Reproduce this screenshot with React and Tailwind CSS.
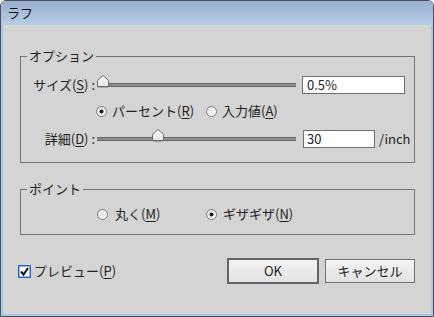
import React from "react";

const font = { fontFamily: '"Noto Sans CJK JP", "Noto Sans", sans-serif' };

function M({ c }) {
  return <span className="underline underline-offset-[2px]">{c}</span>;
}

function Radio({ checked }) {
  return (
    <svg width="11" height="11" viewBox="0 0 11 11" className="shrink-0">
      <defs>
        <linearGradient id="rg" x1="0" y1="0" x2="1" y2="1">
          <stop offset="0" stopColor="#e2e2e2" />
          <stop offset="1" stopColor="#ffffff" />
        </linearGradient>
      </defs>
      <circle cx="5.5" cy="5.5" r="5" fill="url(#rg)" stroke="#7d7d7d" strokeWidth="1" />
      {checked && <circle cx="5.5" cy="5.5" r="2" fill="#1a1a1a" />}
    </svg>
  );
}

function Thumb() {
  return (
    <svg width="12" height="13" viewBox="0 0 12 13">
      <defs>
        <linearGradient id="tg" x1="0" y1="0" x2="0" y2="1">
          <stop offset="0" stopColor="#ffffff" />
          <stop offset="1" stopColor="#e4e4e4" />
        </linearGradient>
      </defs>
      <path d="M0.5 5.5 L6 0.5 L11.5 5.5 L11.5 11.5 L0.5 11.5 Z" fill="url(#tg)" stroke="#6a6a6a" strokeWidth="1" />
      <line x1="1" y1="12.5" x2="11" y2="12.5" stroke="#a9a9a9" strokeWidth="1" />
    </svg>
  );
}

function Slider({ width, pos }) {
  return (
    <div className="relative h-[13px] flex items-center shrink-0" style={{ width }}>
      <div className="w-full h-[4px] bg-[#8c8c8c] border-y border-[#666666]" />
      <div className="absolute top-[-4px]" style={{ left: pos - 6 }}>
        <Thumb />
      </div>
    </div>
  );
}

export default function App() {
  return (
    <div
      className="w-[434px] h-[317px] flex flex-col border border-[#4a5260] rounded-t-[6px] overflow-hidden text-[13px] leading-[16px] text-[#222222]"
      style={font}
    >
      <div className="h-[24px] shrink-0 bg-gradient-to-b from-[#98b0cf] to-[#b9cee7] pl-[6px] flex items-center text-[13px] text-[#111]">
        ラフ
      </div>
      <div className="flex-1 bg-[#d4d4d4] border-x-2 border-b-2 border-[#a9c6e6] flex flex-col">
        <div className="pl-[17px] pr-[16px] pt-[23px] flex flex-col">
          <fieldset className="border border-[#767676] w-[395px] pb-[14px]">
            <legend className="ml-[6px] px-[2px] leading-[16px]">オプション</legend>
            <div className="flex items-center mt-[12px] h-[18px]">
              <div className="w-[76px] text-right pr-[2px]">
                サイズ(<M c="S" />) :
              </div>
              <Slider width={199} pos={6} />
              <div className="ml-[6px] w-[103px] h-[18px] bg-white border border-[#6e6e6e] pl-[4px] flex items-center">
                0.5%
              </div>
            </div>
            <div className="flex items-center mt-[9px] h-[16px] pl-[75px]">
              <div className="flex items-center gap-[5px] w-[110px]">
                <Radio checked />
                <span>
                  パーセント(<M c="R" />)
                </span>
              </div>
              <div className="flex items-center gap-[5px]">
                <Radio />
                <span>
                  入力値(<M c="A" />)
                </span>
              </div>
            </div>
            <div className="flex items-center mt-[11px] h-[18px]">
              <div className="w-[76px] text-right pr-[2px]">
                詳細(<M c="D" />) :
              </div>
              <Slider width={199} pos={61} />
              <div className="ml-[7px] w-[72px] h-[18px] bg-white border border-[#6e6e6e] pl-[3px] flex items-center">
                30
              </div>
              <span className="ml-[4px]">/inch</span>
            </div>
          </fieldset>

          <fieldset className="border border-[#767676] w-[395px] mt-[18px] pb-[12px]">
            <legend className="ml-[6px] px-[2px] leading-[16px]">ポイント</legend>
            <div className="flex items-center mt-[9px] h-[16px] pl-[76px]">
              <div className="flex items-center gap-[7px] w-[109px]">
                <Radio />
                <span>
                  丸く(<M c="M" />)
                </span>
              </div>
              <div className="flex items-center gap-[6px]">
                <Radio checked />
                <span>
                  ギザギザ(<M c="N" />)
                </span>
              </div>
            </div>
          </fieldset>
        </div>

        <div className="mt-[23px] pl-[15px] pr-[16px] h-[26px] flex items-center justify-between">
          <div className="flex items-center gap-[3px]">
            <div className="w-[13px] h-[13px] bg-white border border-[#2f62c8] shadow-[inset_0_0_0_1px_#8fb1ea] flex items-center justify-center">
              <svg width="11" height="11" viewBox="0 0 11 11">
                <path d="M2 5.5 L4.5 8.5 L9 2" fill="none" stroke="#111" strokeWidth="2" />
              </svg>
            </div>
            <span>
              プレビュー(<M c="P" />)
            </span>
          </div>
          <div className="flex items-center gap-[6px]">
            <div className="w-[92px] h-[26px] border-2 border-[#646464] bg-gradient-to-b from-[#f4f4f4] to-[#e2e2e2] flex items-center justify-center">
              OK
            </div>
            <div className="w-[90px] h-[24px] border border-[#707070] bg-gradient-to-b from-[#f4f4f4] to-[#e2e2e2] flex items-center justify-center">
              キャンセル
            </div>
          </div>
        </div>
      </div>
    </div>
  );
}
